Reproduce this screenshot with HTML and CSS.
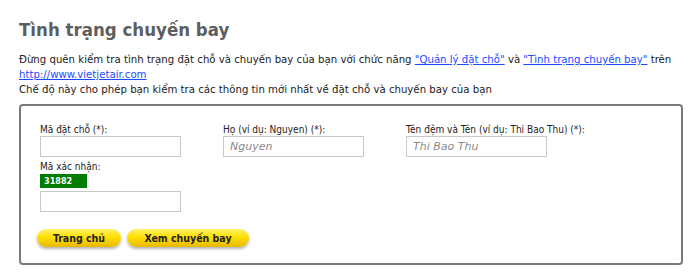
FILE: index.html
```html
<!DOCTYPE html>
<html>
<head>
  <meta charset="utf-8">
  <link rel="stylesheet" href="styles.css">
</head>
<body>
  <div class="page">
    <h1 class="page-title">Tình trạng chuyến bay</h1>
    <p class="intro">
      Đừng quên kiểm tra tình trạng đặt chỗ và chuyến bay của bạn với chức năng <a href="#">"Quản lý đặt chỗ"</a> và <a href="#">"Tình trạng chuyến bay"</a> trên<br>
      <a href="#">http://www.vietjetair.com</a><br>
      Chế độ này cho phép bạn kiểm tra các thông tin mới nhất về đặt chỗ và chuyến bay của bạn
    </p>

    <div class="search-box">
      <div class="field-row">
        <div class="field">
          <label>Mã đặt chỗ (*):</label>
          <input type="text">
        </div>
        <div class="field">
          <label>Họ (ví dụ: Nguyen) (*):</label>
          <input type="text" placeholder="Nguyen">
        </div>
        <div class="field">
          <label>Tên đệm và Tên (ví dụ: Thi Bao Thu) (*):</label>
          <input type="text" placeholder="Thi Bao Thu">
        </div>
      </div>

      <div class="field captcha-field">
        <label>Mã xác nhận:</label>
        <div class="captcha">31882</div>
        <input type="text">
      </div>

      <div class="actions">
        <button class="yellow-btn home-btn">Trang chủ</button>
        <button class="yellow-btn view-btn">Xem chuyến bay</button>
      </div>
    </div>
  </div>
</body>
</html>
```

FILE: styles.css
```css
body {
  margin: 0;
  background: white;
  font-family: "DejaVu Sans Condensed", "DejaVu Sans", sans-serif;
  font-stretch: condensed;
  color: #222;
}

.page {
  padding: 16px 18px 0 19px;
}

.page-title {
  margin: 0;
  font-size: 18.5px;
  font-weight: bold;
  color: #5e5e5e;
  line-height: 28px;
}

.intro {
  margin: 8px 0 0;
  font-size: 11.3px;
  line-height: 15px;
}

.intro a {
  color: #1a4cff;
}

.search-box {
  margin-top: 7px;
  width: 664px;
  height: 161px;
  border: 2px solid #7a7a7a;
  border-radius: 4px;
  padding: 18px 0 0 19px;
  box-sizing: border-box;
}

.field-row {
  display: flex;
  gap: 42px;
}

.field {
  display: flex;
  flex-direction: column;
  width: 141px;
}

.field label {
  font-size: 10px;
  line-height: 12px;
  white-space: nowrap;
  color: #222;
}

.field input {
  width: 141px;
  height: 21px;
  box-sizing: border-box;
  border: 1px solid #c8c8c8;
  margin: 0;
  padding: 0 6px;
  font-family: "DejaVu Sans", Verdana, sans-serif;
  font-size: 11px;
}

.field input::placeholder {
  color: #8a8a8a;
  font-style: italic;
}

.captcha-field {
  margin-top: 4px;
}

.captcha {
  width: 47px;
  height: 14px;
  margin: 1px 0 3px;
  background: #007c00;
  color: white;
  font-size: 9px;
  font-weight: bold;
  line-height: 14px;
  padding-left: 4px;
  box-sizing: border-box;
}

.actions {
  display: flex;
  gap: 6px;
  margin-top: 17px;
  margin-left: -3px;
}

.yellow-btn {
  height: 18px;
  border: none;
  border-radius: 9px;
  background: linear-gradient(#fff16a, #ffe000 45%, #e8b800);
  box-shadow: 0 2px 3px rgba(0,0,0,0.3);
  font-family: "DejaVu Sans Condensed", "DejaVu Sans", sans-serif;
  font-stretch: condensed;
  font-size: 10.5px;
  font-weight: bold;
  color: #222;
  padding: 0;
}

.home-btn {
  width: 84px;
}

.view-btn {
  width: 122px;
}
```
